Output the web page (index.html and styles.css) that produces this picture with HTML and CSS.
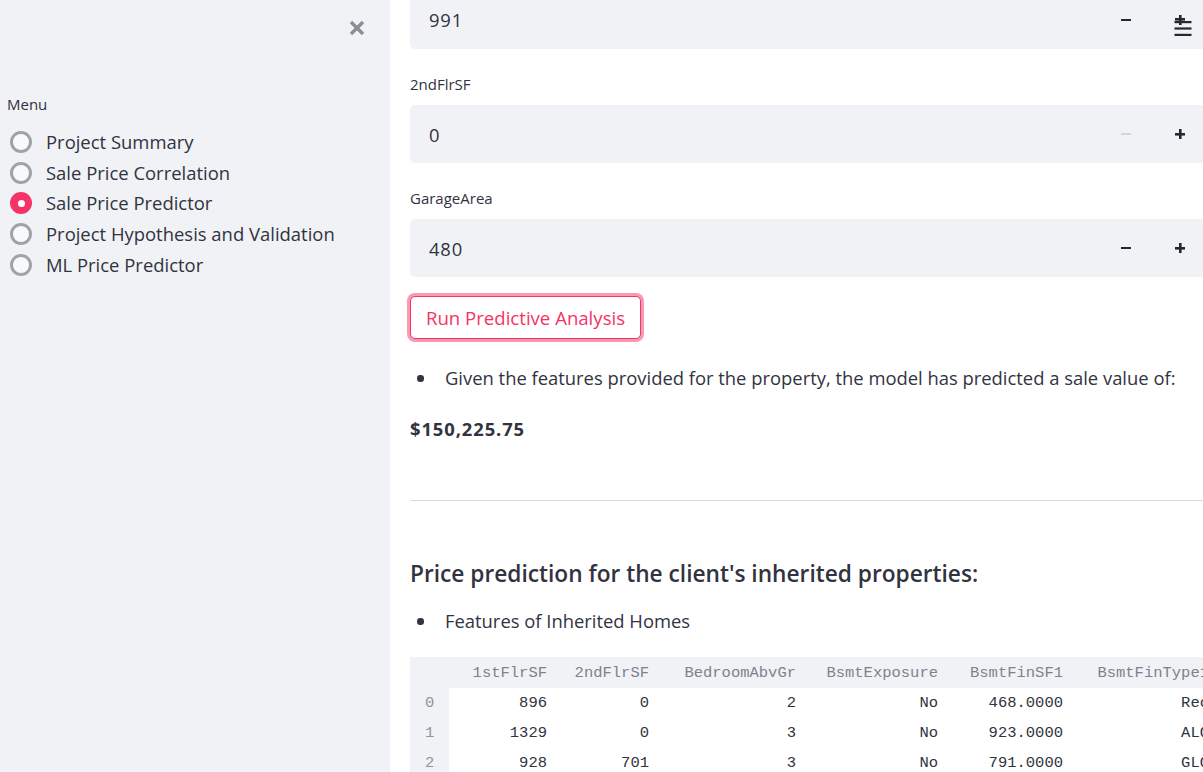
FILE: index.html
```html
<!DOCTYPE html>
<html lang="en">
<head>
<meta charset="utf-8">
<title>Sale Price Predictor</title>
<link rel="stylesheet" href="styles.css">
</head>
<body>
<aside class="sidebar">
  <div class="sb-top">
    <button class="close-btn" aria-label="Close sidebar">
      <svg width="16" height="16" viewBox="0 0 16 16"><path d="M2 2 L14 14 M14 2 L2 14" stroke="#8c8e95" stroke-width="3.4" stroke-linecap="butt"/></svg>
    </button>
  </div>
  <div class="menu-label">Menu</div>
  <div class="radio-group">
    <div class="radio"><span class="circle"></span><span class="radio-text">Project Summary</span></div>
    <div class="radio"><span class="circle"></span><span class="radio-text">Sale Price Correlation</span></div>
    <div class="radio"><span class="circle checked"></span><span class="radio-text">Sale Price Predictor</span></div>
    <div class="radio"><span class="circle"></span><span class="radio-text">Project Hypothesis and Validation</span></div>
    <div class="radio"><span class="circle"></span><span class="radio-text">ML Price Predictor</span></div>
  </div>
</aside>

<main class="main">
  <div class="block">
    <div class="numinput first">
      <div class="num-value">991</div>
      <div class="step"><span class="minus"></span></div>
      <div class="step"><span class="plus"></span></div>
    </div>

    <div class="field-label">2ndFlrSF</div>
    <div class="numinput">
      <div class="num-value">0</div>
      <div class="step"><span class="minus disabled"></span></div>
      <div class="step"><span class="plus"></span></div>
    </div>

    <div class="field-label">GarageArea</div>
    <div class="numinput">
      <div class="num-value">480</div>
      <div class="step"><span class="minus"></span></div>
      <div class="step"><span class="plus"></span></div>
    </div>

    <div class="btn-row"><button class="run-btn">Run Predictive Analysis</button></div>

    <ul class="bullets b1"><li>Given the features provided for the property, the model has predicted a sale value of:</li></ul>

    <p class="price">$150,225.75</p>

    <hr class="divider">

    <h3 class="section-title">Price prediction for the client's inherited properties:</h3>

    <ul class="bullets b2"><li>Features of Inherited Homes</li></ul>

    <div class="table-wrap">
      <table class="df">
        <colgroup>
          <col class="c-idx"><col class="c1"><col class="c2"><col class="c3"><col class="c4"><col class="c5"><col class="c6">
        </colgroup>
        <thead>
          <tr><th class="idx"></th><th>1stFlrSF</th><th>2ndFlrSF</th><th>BedroomAbvGr</th><th>BsmtExposure</th><th>BsmtFinSF1</th><th>BsmtFinType1</th></tr>
        </thead>
        <tbody>
          <tr><td class="idx">0</td><td>896</td><td>0</td><td>2</td><td>No</td><td>468.0000</td><td>Rec</td></tr>
          <tr><td class="idx">1</td><td>1329</td><td>0</td><td>3</td><td>No</td><td>923.0000</td><td>ALQ</td></tr>
          <tr><td class="idx">2</td><td>928</td><td>701</td><td>3</td><td>No</td><td>791.0000</td><td>GLQ</td></tr>
        </tbody>
      </table>
    </div>
  </div>
</main>

<button class="hamburger" aria-label="Main menu">
  <svg width="18" height="16" viewBox="0 0 18 16"><rect x="0.5" y="1" width="17" height="2.2" fill="#262730"/><rect x="0.5" y="7.4" width="17" height="2.2" fill="#262730"/><rect x="0.5" y="13.8" width="17" height="2.2" fill="#262730"/></svg>
</button>
</body>
</html>
```

FILE: styles.css
```css
html, body {
  margin: 0;
  padding: 0;
  height: 100%;
}
body {
  display: flex;
  width: 1203px;
  height: 772px;
  overflow: hidden;
  font-family: "Open Sans", "Noto Sans", sans-serif;
  color: #31333f;
  background: #ffffff;
}

/* Sidebar */
.sidebar {
  width: 390px;
  flex-shrink: 0;
  background: #f0f2f6;
  display: flex;
  flex-direction: column;
  box-sizing: border-box;
  padding-top: 19.5px;
}
.sb-top {
  display: flex;
  justify-content: flex-end;
  padding-right: 25px;
  height: 16px;
}
.close-btn {
  border: 0;
  background: transparent;
  padding: 0;
  width: 16px;
  height: 16px;
  display: block;
}
.close-btn svg { display: block; }
.menu-label {
  margin-top: 58px;
  margin-left: 7px;
  font-size: 15px;
  line-height: 20px;
  height: 20px;
}
.radio-group {
  margin-top: 13px;
  display: flex;
  flex-direction: column;
}
.radio {
  display: flex;
  align-items: center;
  height: 30.8px;
}
.circle {
  width: 22px;
  height: 22px;
  box-sizing: border-box;
  border-radius: 50%;
  border: 3px solid #a0a2a8;
  background: #f8f9fb;
  margin-left: 10px;
  flex-shrink: 0;
  display: flex;
  align-items: center;
  justify-content: center;
}
.circle.checked {
  border: 0;
  background: #f63366;
}
.circle.checked::after {
  content: "";
  width: 7px;
  height: 7px;
  border-radius: 50%;
  background: #ffffff;
}
.radio-text {
  margin-left: 14px;
  font-size: 18.45px;
  line-height: 24px;
  white-space: nowrap;
}

/* Main */
.main {
  flex: 1;
  overflow: hidden;
  background: #ffffff;
}
.block {
  width: 797px;
  padding-left: 20px;
  display: flex;
  flex-direction: column;
}
.numinput {
  display: flex;
  height: 58px;
  background: #f0f2f6;
  border-radius: 5px;
}
.numinput.first {
  margin-top: -9.3px;
}
.num-value {
  flex: 1;
  display: flex;
  align-items: center;
  padding-left: 19px;
  font-size: 18.4px;
  letter-spacing: 0.8px;
}
.step {
  width: 54px;
  display: flex;
  align-items: center;
  justify-content: center;
}
.minus {
  display: block;
  width: 10px;
  height: 2.2px;
  background: #262730;
}
.minus.disabled {
  background: #d3d6dd;
}
.plus {
  display: block;
  width: 10px;
  height: 10px;
  background:
    linear-gradient(#262730, #262730) center / 10px 2.6px no-repeat,
    linear-gradient(#262730, #262730) center / 2.6px 10px no-repeat;
}
.field-label {
  margin-top: 25.3px;
  font-size: 15px;
  line-height: 20px;
  height: 20px;
  margin-bottom: 11px;
}
.btn-row {
  margin-top: 19px;
  display: flex;
}
.run-btn {
  height: 42.5px;
  padding: 0;
  width: 231px;
  box-sizing: border-box;
  background: #ffffff;
  border: 1px solid #f63366;
  border-radius: 5px;
  color: #f63366;
  font-family: "Open Sans", "Noto Sans", sans-serif;
  font-size: 18.6px;
  box-shadow: 0 0 0 3px rgba(246, 51, 102, 0.5);
  white-space: nowrap;
}
.bullets {
  list-style: none;
  margin: 0;
  padding: 0;
}
.bullets li {
  display: flex;
  align-items: center;
  font-size: 18.4px;
  line-height: 28px;
  white-space: nowrap;
}
.bullets li::before {
  content: "";
  width: 6.5px;
  height: 6.5px;
  border-radius: 50%;
  background: #31333f;
  margin-left: 7px;
  margin-right: 21.5px;
  flex-shrink: 0;
}
.b1 { margin-top: 25.5px; }
.price {
  margin: 23px 0 0;
  font-size: 18.4px;
  line-height: 28px;
  font-weight: 700;
  letter-spacing: 0.9px;
}
.divider {
  margin: 57px 0 0;
  border: 0;
  height: 1px;
  background: #dadbde;
}
.section-title {
  margin: 57px 0 0;
  font-size: 22.7px;
  line-height: 32px;
  font-weight: 600;
  white-space: nowrap;
}
.b2 { margin-top: 17px; }
.table-wrap {
  margin-top: 22px;
}
.df {
  border-collapse: collapse;
  table-layout: fixed;
  font-family: "Liberation Mono", "DejaVu Sans Mono", monospace;
  font-size: 15.5px;
  width: 814px;
}
.c-idx { width: 39px; }
.c1 { width: 113px; }
.c2 { width: 102px; }
.c3 { width: 147px; }
.c4 { width: 142px; }
.c5 { width: 125px; }
.c6 { width: 146px; }
.df th, .df td {
  height: 30px;
  padding: 0 15px 0 0;
  text-align: right;
  white-space: nowrap;
  overflow: hidden;
  font-weight: 400;
}
.df thead th {
  height: 31px;
  background: #f0f2f6;
  color: #7e828b;
}
.df td {
  color: #31333f;
}
.df .idx {
  background: #f0f2f6;
  color: #8f939b;
  text-align: left;
  padding: 0 0 0 15px;
}

/* Toolbar overlay */
.hamburger {
  position: fixed;
  top: 20px;
  right: 11px;
  border: 0;
  background: transparent;
  padding: 0;
  width: 18px;
  height: 16px;
}
.hamburger svg { display: block; }
```
